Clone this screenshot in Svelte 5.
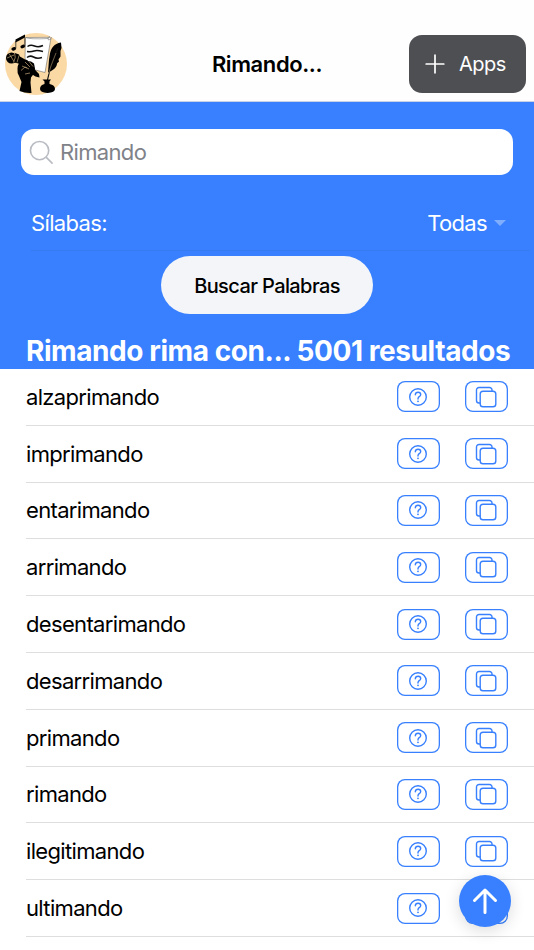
<script lang="ts">
  let query = $state('');

  const words = [
    'alzaprimando',
    'imprimando',
    'entarimando',
    'arrimando',
    'desentarimando',
    'desarrimando',
    'primando',
    'rimando',
    'ilegitimando',
    'ultimando'
  ];
</script>

<div class="page">
  <header class="toolbar">
    <svg class="logo" viewBox="0 0 62 62" aria-label="Rimando">
      <circle cx="31" cy="31" r="31" fill="#fad9a5" />
      <path d="M20.500 4.500 44 4.300q2.500-.3 1.500 3.500L40 39.500 23 35l-3-10Z" fill="#fff" stroke="#555" stroke-width=".5" />
      <path d="M20.500 4.500q4 2 23 1M45 3.500q-3 .5-1.500 3.500 3 0 3-3" fill="none" stroke="#777" stroke-width=".6" />
      <path d="M22.500 13.500q3-2 7-.5t8.500-.5M22 18.500q4 .5 7-.5t9 .5M22 24.500q3-2.500 6.500-.5t8.500 .5" fill="none" stroke="#111" stroke-width="1.500" />
      <path d="M10.800 15.500V8M19.800 13.500V5" fill="none" stroke="#111" stroke-width=".7" />
      <path d="m10.500 6.500 9.500-5v3l-9.500 5Z" />
      <ellipse cx="8.700" cy="15.800" rx="2.400" ry="1.700" transform="rotate(-20 8.700 15.800)" />
      <ellipse cx="17.700" cy="13.500" rx="2.400" ry="1.700" transform="rotate(-20 17.700 13.500)" />
      <circle cx="6.500" cy="25" r="5.500" />
      <path d="m10 20 4 1.500 1.500 4-2 5-4.500-1Z" />
      <path d="m14 23 7 4 13 14 .5 3.500-4-1L20 37l-7-7Z" />
      <path d="M12.500 35.500q0-5 3.500-6.500l4-2q2-1 3 1l3 .5 3 2 1 5-1 5-3 4-.5 5 1 10.500q-6 .5-12-2l2-9-2.500-6q-2-3-1.500-7.500Z" />
      <path d="M9.500 19.500q2 5-1 10M4 20.500l5 8M2 25l7-3M14 22.500l-2 7M17 33l5 2M16 37.500l4-3.500 4 2M20 29l5 5M24 28.500l4 5M20 41l5-1" fill="none" stroke="#c3a678" stroke-width=".7" />
      <path d="M56 9.500c-7 1-10 6-11 11l-1 6-1 13c5-2 9-5 9-9l2-2-.5-2 2-3V18l1-3Z" />
      <path d="m53 15-7 17-4 17" fill="none" stroke="#111" stroke-width="1.100" />
      <path d="m51 20-5 13-2.500 8" fill="none" stroke="#c3a678" stroke-width=".5" />
      <path d="M37.500 46.500h8.500l-1.500 2v2.500q5.500 1 5.500 5 0 3.500-7.500 4-7.500-.5-7.500-4 0-4 4.500-5v-2.500Z" />
    </svg>
    <h1>Rimando...</h1>
    <button class="apps">
      <svg viewBox="0 0 20 20" aria-hidden="true">
        <path d="M10 1.200v17.600M1.200 10h17.600" fill="none" stroke="#fff" stroke-width="1.700" stroke-linecap="round" />
      </svg>
      <span>Apps</span>
    </button>
  </header>

  <section class="search-panel">
    <label class="searchbar">
      <svg viewBox="0 0 26 26" aria-hidden="true">
        <circle cx="11" cy="11" r="9.500" />
        <path d="m18 18 6 6" />
      </svg>
      <input bind:value={query} placeholder="Rimando" aria-label="Palabra" />
    </label>
    <div class="syllables">
      <span>Sílabas:</span>
      <div class="select">
        <span>Todas</span>
        <i class="caret"></i>
      </div>
    </div>
    <button class="submit"><span>Buscar Palabras</span></button>
    <h2>Rimando rima con... 5001 resultados</h2>
  </section>

  <ul class="results">
    {#each words as word}
      <li>
        <span class="word">{word}</span>
        <button class="action" aria-label="Definición">
          <svg viewBox="0 0 20 20" width="20" height="20">
            <circle cx="10" cy="10" r="8.300" />
            <path d="M7.300 7.700C7.400 6 8.500 5.200 10.100 5.200c1.500 0 2.600.9 2.600 2.200 0 1.100-.6 1.700-1.500 2.300-.9.600-1.200 1-1.200 2v.3" />
            <circle class="dot" cx="10" cy="14.300" r=".9" />
          </svg>
        </button>
        <button class="action copy" aria-label="Copiar">
          <svg viewBox="0 0 22 22" width="22" height="22">
            <rect x="5.200" y="5.200" width="15.600" height="15.600" rx="2.800" />
            <path d="M17 5.200V4a2.500 2.500 0 0 0-2.500-2.500H4A2.500 2.500 0 0 0 1.500 4v10.500A2.500 2.500 0 0 0 4 17h1.200" />
          </svg>
        </button>
      </li>
    {/each}
  </ul>

  <button class="fab" aria-label="Subir">
    <svg viewBox="0 0 28 28" width="28" height="28">
      <path d="M3.500 13.500 14 3l10.500 10.500M14 3.500v22" />
    </svg>
  </button>
</div>

<style>
  :global(body) {
    margin: 0;
    background: #fff;
  }

  .page {
    position: relative;
    box-sizing: border-box;
    width: 534px;
    height: 950px;
    overflow: hidden;
    background: #fff;
    color: #000;
    font-family: Inter, "Liberation Sans", sans-serif;
    font-size: 22px;
  }

  button {
    box-sizing: border-box;
    margin: 0;
    padding: 0;
    border: 0;
    font: inherit;
    color: inherit;
  }

  svg {
    display: block;
    flex: none;
  }

  .toolbar {
    display: grid;
    grid-template-columns: 1fr auto 1fr;
    align-items: center;
    box-sizing: border-box;
    height: 102px;
    padding: 27px 8px 0 5px;
    border-bottom: 1px solid #c9d2e5;
    background: #fefefe;
  }

  .logo {
    width: 62px;
    height: 62px;
  }

  h1 {
    margin: 0;
    padding-left: 3px;
    font-size: 22px;
    line-height: 28px;
    font-weight: 600;
    letter-spacing: -0.4px;
  }

  .apps {
    display: flex;
    justify-self: end;
    align-items: center;
    gap: 14px;
    width: 117px;
    height: 58px;
    padding-left: 16px;
    border-radius: 13px;
    background: #4e4f53;
    color: #fff;
    font-size: 20px;
    letter-spacing: -0.5px;
  }

  .apps svg {
    width: 20px;
    height: 20px;
  }

  .search-panel {
    display: flex;
    flex-direction: column;
    box-sizing: border-box;
    height: 267px;
    padding-top: 27px;
    background: #3880ff;
    color: #fff;
  }

  .searchbar {
    display: flex;
    align-items: center;
    gap: 6px;
    box-sizing: border-box;
    height: 46px;
    margin: 0 21px;
    padding-left: 8px;
    border-radius: 13px;
    background: #fff;
  }

  .searchbar svg {
    width: 25px;
    height: 25px;
    fill: none;
    stroke: #b9bcc3;
    stroke-width: 1.7;
    stroke-linecap: round;
  }

  input {
    flex: 1;
    min-width: 0;
    padding: 0;
    border: 0;
    outline: 0;
    background: none;
    font: inherit;
    letter-spacing: -0.65px;
  }

  input::placeholder {
    color: #808289;
    opacity: 1;
  }

  .syllables {
    display: flex;
    align-items: center;
    justify-content: space-between;
    box-sizing: border-box;
    height: 56px;
    margin: 20px 4px 0 31px;
    padding-right: 24px;
    border-bottom: 1px solid #387af0;
    letter-spacing: -0.65px;
  }

  .select {
    display: flex;
    align-items: center;
    gap: 7px;
  }

  .caret {
    border: 6px solid transparent;
    border-top-color: #80aeff;
    border-bottom: 0;
  }

  .submit {
    align-self: center;
    width: 212px;
    height: 58px;
    margin-top: 5px;
    padding-top: 1px;
    border-radius: 29px;
    background: #f4f5f8;
    color: #000;
    font-size: 20px;
    font-weight: 500;
    letter-spacing: -0.6px;
  }

  h2 {
    margin: 20px 0 0 26px;
    font-size: 28px;
    line-height: 35px;
    font-weight: 700;
    letter-spacing: -0.43px;
    white-space: nowrap;
  }

  .results {
    margin: 0;
    padding: 0 0 0 26px;
    list-style: none;
  }

  li {
    display: flex;
    align-items: center;
    box-sizing: border-box;
    height: 56.8px;
    padding-right: 26px;
    border-bottom: 1px solid #dedede;
  }

  .word {
    flex: 1;
    letter-spacing: -0.66px;
  }

  .action {
    display: flex;
    align-items: center;
    justify-content: center;
    width: 42.5px;
    height: 31px;
    border-radius: 8px;
    background: #fff;
    box-shadow: inset 0 0 0 1.3px #3880ff;
  }

  .copy {
    width: 43px;
    margin-left: 25.500px;
    padding-right: 1px;
  }

  .action svg {
    fill: none;
    stroke: #3880ff;
    stroke-width: 1.4;
    stroke-linecap: round;
    stroke-linejoin: round;
  }

  .action .dot {
    fill: #3880ff;
    stroke: none;
  }

  .fab {
    position: absolute;
    top: 875px;
    left: 459px;
    display: flex;
    align-items: center;
    justify-content: center;
    width: 52px;
    height: 52px;
    border-radius: 50%;
    background: #3880ff;
    box-shadow: 0 4px 16px rgba(0, 0, 0, 0.14);
  }

  .fab svg {
    fill: none;
    stroke: #fff;
    stroke-width: 3;
    stroke-linecap: round;
    stroke-linejoin: round;
  }
</style>
